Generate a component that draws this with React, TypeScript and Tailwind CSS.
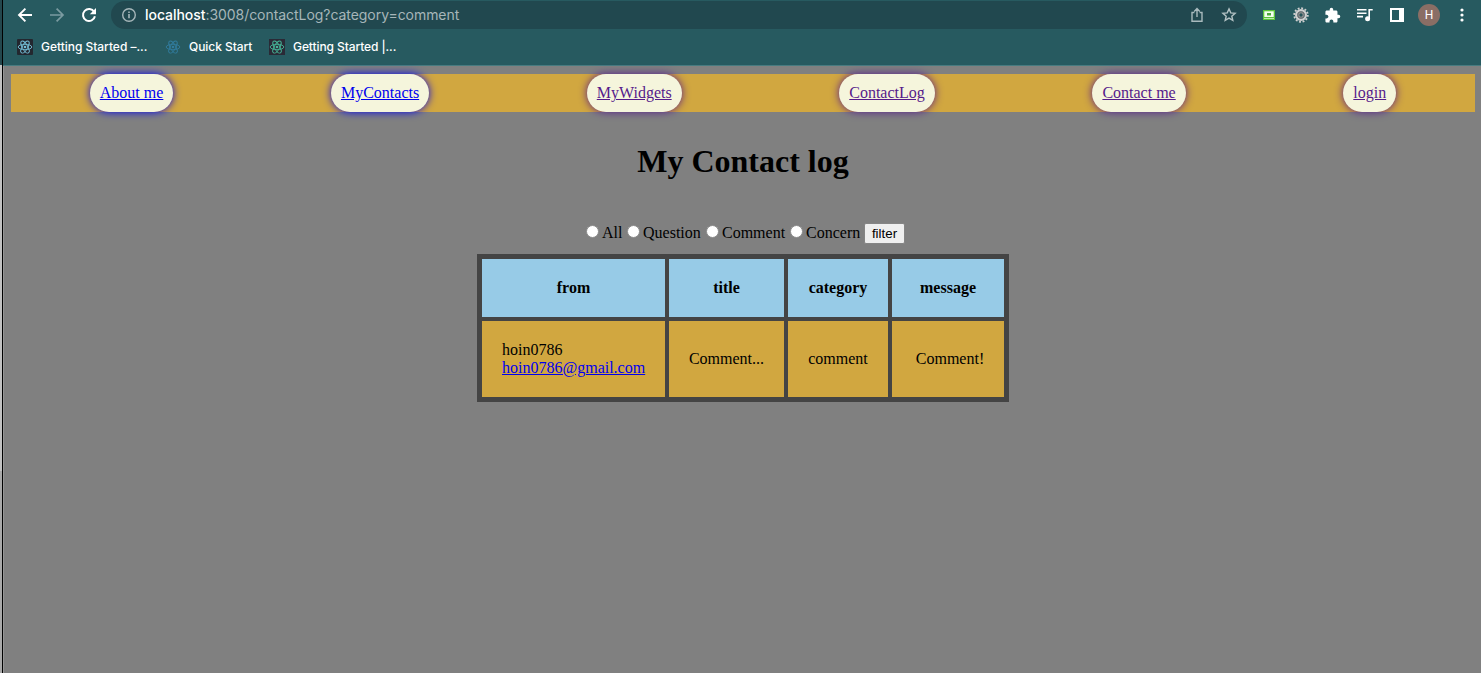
import React from "react";

const navLinks = [
  { label: "About me", visited: false },
  { label: "MyContacts", visited: false },
  { label: "MyWidgets", visited: true },
  { label: "ContactLog", visited: true },
  { label: "Contact me", visited: true },
  { label: "login", visited: true },
];

const filters = [
  { label: "All", width: "w-[41px]" },
  { label: "Question", width: "w-[79px]" },
  { label: "Comment", width: "w-[84px]" },
  { label: "Concern", width: "w-[74px]" },
];

function ReactLogo({ className }: { className: string }) {
  return (
    <svg viewBox="0 0 16 16" className={className} fill="none" stroke="currentColor" strokeWidth="0.9">
      <circle cx="8" cy="8" r="1.3" fill="currentColor" stroke="none" />
      <ellipse cx="8" cy="8" rx="6.8" ry="2.7" />
      <ellipse cx="8" cy="8" rx="6.8" ry="2.7" transform="rotate(60 8 8)" />
      <ellipse cx="8" cy="8" rx="6.8" ry="2.7" transform="rotate(120 8 8)" />
    </svg>
  );
}

function Toolbar() {
  return (
    <div className="flex h-[30px] items-center">
      <svg viewBox="0 0 16 16" className="ml-[14px] size-4 shrink-0" fill="none" stroke="#fff" strokeWidth="1.9">
        <path d="M15 8H2.2M8.4 1.6L2 8l6.4 6.4" />
      </svg>
      <svg viewBox="0 0 16 16" className="ml-4 size-4 shrink-0" fill="none" stroke="#7b9ba1" strokeWidth="1.7">
        <path d="M1 8h12.8M7.6 1.6L14 8l-6.4 6.4" />
      </svg>
      <svg viewBox="0 0 16 16" className="ml-4 size-4 shrink-0">
        <path d="M13.2 5A6 6 0 1 0 13.9 9.2" fill="none" stroke="#fff" strokeWidth="2" />
        <path d="M15 1v6.2H8.8z" fill="#fff" />
      </svg>
      <div className="ml-[14px] flex h-7 w-[1136px] shrink-0 items-center rounded-full bg-[#21484f]">
        <svg viewBox="0 0 16 16" className="ml-[10px] size-4" fill="none" stroke="#a6b6b9" strokeWidth="1.4">
          <circle cx="8" cy="8" r="6.3" />
          <path d="M8 7v4.3M8 4.4v1.5" strokeWidth="1.6" />
        </svg>
        <span className="ml-2 block w-[320px] whitespace-nowrap font-['Inter',sans-serif] text-[14px] leading-none tracking-[-0.05px] text-[#a6b6b9]">
          <span className="font-medium text-white">localhost</span>:3008/contactLog?category=comment
        </span>
        <svg viewBox="0 0 16 16" className="ml-auto size-4" fill="none" stroke="#a9babd" strokeWidth="1.4">
          <path d="M5.4 5.5H3v8.8h10V5.5h-2.4M8 10V1.8M5.2 4.4L8 1.6l2.8 2.8" />
        </svg>
        <svg viewBox="0 0 16 16" className="ml-4 mr-[10px] size-4" fill="none" stroke="#b3c2c4" strokeWidth="1.4">
          <path d="M8 1.9l1.75 4 4.35.4-3.3 2.85 1 4.25L8 11.15 4.2 13.4l1-4.25L1.9 6.3l4.35-.4z" />
        </svg>
      </div>
      <div className="ml-[14px] flex items-center">
        <svg viewBox="0 0 16 16" className="size-4">
          <path d="M2 3h12v10H2z" fill="#5cc43c" />
          <path d="M3.3 4.3h9.4v5.7H3.3z" fill="#f4fff0" />
          <path d="M6 6h4v2.5H6z" fill="#4ea83c" />
          <path d="M3 11.5h10" stroke="#d8f5cd" strokeWidth="0.8" />
        </svg>
        <svg viewBox="0 0 16 16" className="ml-4 size-4">
          <circle cx="8" cy="8" r="6.8" fill="none" stroke="#d0d0d0" strokeWidth="1.8" strokeDasharray="1.9 1.66" />
          <circle cx="8" cy="8" r="4.8" fill="none" stroke="#d0d0d0" strokeWidth="2.4" />
          <circle cx="8" cy="8" r="3.7" fill="#6f7476" />
          <circle cx="8" cy="8" r="2.5" fill="#999" />
          <circle cx="8" cy="8" r="1.7" fill="#28545a" />
        </svg>
        <svg viewBox="0 0 24 24" className="ml-[15px] size-[17px]" fill="#fff">
          <path d="M20.5 11H19V7c0-1.1-.9-2-2-2h-4V3.5a2.5 2.5 0 0 0-5 0V5H4c-1.1 0-1.99.9-1.99 2v3.8H3.5c1.49 0 2.7 1.21 2.7 2.7s-1.21 2.7-2.7 2.7H2V20c0 1.1.9 2 2 2h3.8v-1.5c0-1.49 1.21-2.7 2.7-2.7s2.7 1.21 2.7 2.7V22H17c1.1 0 2-.9 2-2v-4h1.5a2.5 2.5 0 0 0 0-5z" />
        </svg>
        <svg viewBox="0 0 17 16" className="ml-[15px] h-4 w-[17px]" fill="none" stroke="#fff" strokeWidth="1.6">
          <path d="M1 2.8h9.5M1 6.2h9.5M1 9.6h6M13.2 11.7V2.8h3.5" />
          <circle cx="11.6" cy="11.8" r="1.7" fill="#fff" />
        </svg>
        <svg viewBox="0 0 14 14" className="ml-[17px] size-[14px]">
          <path d="M1 1h12v12H1z" fill="none" stroke="#fff" strokeWidth="2" />
          <path d="M9 0h5v14H9z" fill="#fff" />
        </svg>
        <span className="ml-[14px] flex size-[22px] items-center justify-center rounded-full bg-[#8a6e65] font-['Roboto',sans-serif] text-[12px] text-white">
          H
        </span>
        <svg viewBox="0 0 4 14" className="ml-[20px] h-[14px] w-1" fill="#fff">
          <circle cx="2" cy="2" r="1.6" />
          <circle cx="2" cy="7" r="1.6" />
          <circle cx="2" cy="12" r="1.6" />
        </svg>
      </div>
    </div>
  );
}

function Bookmarks() {
  return (
    <div className="flex h-[34px] items-center whitespace-nowrap pl-[14px] font-['Inter',sans-serif] text-[12px] font-medium text-white">
      <ReactLogo className="size-4 rounded-[1px] bg-[#23272f] text-[#74bfd8]" />
      <span className="ml-2 w-[107px] tracking-[-0.03px]">Getting Started –...</span>
      <ReactLogo className="ml-[17px] size-4 text-[#317c9e]" />
      <span className="ml-2 w-[64px] tracking-[-0.05px]">Quick Start</span>
      <ReactLogo className="ml-4 size-4 bg-[#2a2a36] text-[#45b597]" />
      <span className="ml-2 tracking-[-0.09px]">Getting Started |...</span>
    </div>
  );
}

const th = "h-[58px] bg-[#97cbe7] p-0 text-center font-bold";
const td = "h-[76px] bg-[#d1a740] p-0";

export default function App() {
  return (
    <div className="flex h-[673px] w-[1481px] overflow-hidden bg-[#808080] font-['Liberation_Serif',serif] text-[16px] leading-[18px] text-black">
      <div className="flex w-[3px] shrink-0 flex-col border-r border-black">
        <div className="h-[65px] bg-[#24474d]" />
        <div className="h-[406px] bg-[#c2c2c2]" />
        <div className="flex-1 bg-[#a9a9a9]" />
      </div>
      <div className="w-[1478px] shrink-0 border-l border-[#969696]">
        <header className="-ml-px h-[66px] border-b border-[#477b80] bg-[#275a60]">
          <Toolbar />
          <Bookmarks />
        </header>
        <main className="pl-[7px] pr-[6px] pt-2">
          <nav className="flex h-[38px] justify-around bg-[#d1a740]">
            {navLinks.map((link) => (
              <a
                key={link.label}
                href="#"
                className={`flex h-[38px] items-center whitespace-nowrap rounded-[20px] bg-[#f5f5dc] px-[10px] underline ${
                  link.visited ? "text-[#551a8b] shadow-[0_0_8px_#551a8b]" : "text-[#0000ee] shadow-[0_0_8px_#0000ee]"
                }`}
              >
                {link.label}
              </a>
            ))}
          </nav>
          <h1 className="mt-[31px] text-center text-[32px] font-bold leading-[36px]">My Contact log</h1>
          <form className="mt-[43px] flex h-[22px] items-center pl-[575px]">
            {filters.map((f) => (
              <label key={f.label} className={`flex items-center whitespace-nowrap ${f.width}`}>
                <input
                  type="radio"
                  name="category"
                  className="mb-[3px] mr-[3px] size-[13px] shrink-0 appearance-none rounded-full border border-[#8b8b8b] bg-white"
                />
                {f.label}
              </label>
            ))}
            <button
              type="button"
              className="mt-px h-[21px] w-[41px] rounded-[2px] border border-[#858585] bg-[#efefef] font-['Liberation_Sans',sans-serif] text-[13.33px] leading-none"
            >
              filter
            </button>
          </form>
          <table className="ml-[466px] mt-[10px] w-[532px] table-fixed border-separate border-spacing-x-[4px] border-spacing-y-[4px] border border-[#444] bg-[#444]">
            <colgroup>
              <col className="w-[183px]" />
              <col className="w-[115px]" />
              <col className="w-[100px]" />
              <col className="w-[112px]" />
            </colgroup>
            <thead>
              <tr>
                <th className={th}>from</th>
                <th className={th}>title</th>
                <th className={th}>category</th>
                <th className={th}>message</th>
              </tr>
            </thead>
            <tbody>
              <tr>
                <td className={td}>
                  <div className="pl-5">hoin0786</div>
                  <div className="pl-5">
                    <a href="#" className="text-[#0000ee] underline">
                      hoin0786@gmail.com
                    </a>
                  </div>
                </td>
                <td className={`${td} text-center`}>Comment...</td>
                <td className={`${td} text-center`}>comment</td>
                <td className={`${td} pl-1 text-center`}>Comment!</td>
              </tr>
            </tbody>
          </table>
        </main>
      </div>
    </div>
  );
}
